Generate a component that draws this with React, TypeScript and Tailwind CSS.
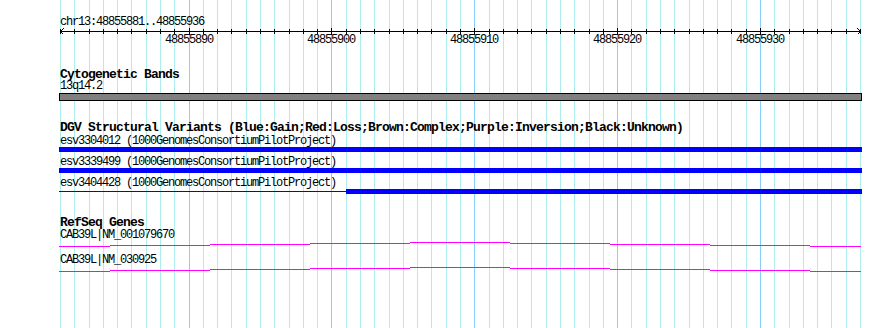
import React from 'react';

const BP_START = 48855881;
const PX_PER_BP = 800 / 56;

// one grid line per base, every tenth base is a major line with a label
const grid = Array.from({ length: 57 }, (_, i) => ({
  x: Math.round(60 + i * PX_PER_BP),
  bp: BP_START + i,
  major: (BP_START + i) % 10 === 0,
}));

// intron "hat" lines, drawn as 1px steps like the original raster
const hatBounds = [59, 110, 210, 310, 410, 510, 610, 710, 810, 861];
const hatRise = [4, 3, 2, 1, 0, 1, 2, 3, 4];

const small = "text-[12px] tracking-[-1.2px] whitespace-nowrap";
const label = `h-[12px] leading-[12px] pl-[60px] ${small}`;
const title = "pl-[60px] text-[13px] font-bold tracking-[-0.8px] whitespace-nowrap";

const Hat: React.FC = () => (
  <svg className="block" width={890} height={6} shapeRendering="crispEdges">
    {hatRise.map((r, i) => (
      <rect key={i} x={hatBounds[i]} y={1 + r} width={hatBounds[i + 1] - hatBounds[i]} height={1} fill="#ff00ff" />
    ))}
  </svg>
);

const Bar: React.FC = () => <div className="ml-[59px] w-[803px] h-[5px] bg-[#0000ff]" />;

export default function App() {
  return (
    <div className="relative w-[890px] h-[328px] overflow-hidden bg-white text-black font-['Liberation_Mono',monospace]">
      {/* Background grid */}
      <svg className="absolute inset-0" width={890} height={328} shapeRendering="crispEdges">
        {grid.map((g) => (
          <rect key={g.bp} x={g.x} y={0} width={1} height={328} fill={g.major ? '#87cefa' : '#afeeee'} />
        ))}
      </svg>

      <div className="relative pt-[16px]">
        {/* Ruler */}
        <div className="relative h-[31px]">
          <div className={`h-[13px] leading-[13px] pl-[60px] ${small}`}>chr13:48855881..48855936</div>
          <svg className="absolute left-0 top-[11px]" width={890} height={8} shapeRendering="crispEdges">
            <rect x={60} y={4} width={801} height={1} fill="#000" />
            {grid.map((g) => (
              <rect key={g.bp} x={g.x} y={g.major ? 1 : 2} width={1} height={g.major ? 7 : 5} fill="#000" />
            ))}
            <path d="M63.5 1.5 L60.5 4.5 L63.5 7.5" stroke="#000" fill="none" />
            <path d="M857.5 1.5 L860.5 4.5 L857.5 7.5" stroke="#000" fill="none" />
          </svg>
          {grid
            .filter((g) => g.major)
            .map((g) => (
              <span key={g.bp} className={`absolute top-[18px] leading-[13px] ${small}`} style={{ left: g.x - 24 }}>
                {g.bp}
              </span>
            ))}
        </div>

        {/* Cytogenetic Bands */}
        <div className={`${title} mt-[22px] h-[11px] leading-[11px]`}>Cytogenetic Bands</div>
        <div className={label}>13q14.2</div>
        <div className="mt-px ml-[59px] w-[803px] h-[8px] border border-black bg-[#808080]" />

        {/* DGV Structural Variants */}
        <div className={`${title} mt-[20px] h-[14px] leading-[13px]`}>
          DGV Structural Variants (Blue:Gain;Red:Loss;Brown:Complex;Purple:Inversion;Black:Unknown)
        </div>
        <div className={label}>esv3304012 (1000GenomesConsortiumPilotProject)</div>
        <Bar />
        <div className={`${label} mt-[4px]`}>esv3339499 (1000GenomesConsortiumPilotProject)</div>
        <Bar />
        <div className={`${label} mt-[4px]`}>esv3404428 (1000GenomesConsortiumPilotProject)</div>
        <div className="ml-[59px] w-[803px] h-[5px] flex items-center">
          <div className="w-[287px] h-px bg-[#0000ff]" />
          <div className="flex-1 h-full bg-[#0000ff]" />
        </div>

        {/* RefSeq Genes */}
        <div className={`${title} mt-[22px] h-[13px] leading-[13px]`}>RefSeq Genes</div>
        <div className={label}>CAB39L|NM_001079670</div>
        <Hat />
        <div className={`${label} mt-[7px]`}>CAB39L|NM_030925</div>
        <Hat />
      </div>
    </div>
  );
}
